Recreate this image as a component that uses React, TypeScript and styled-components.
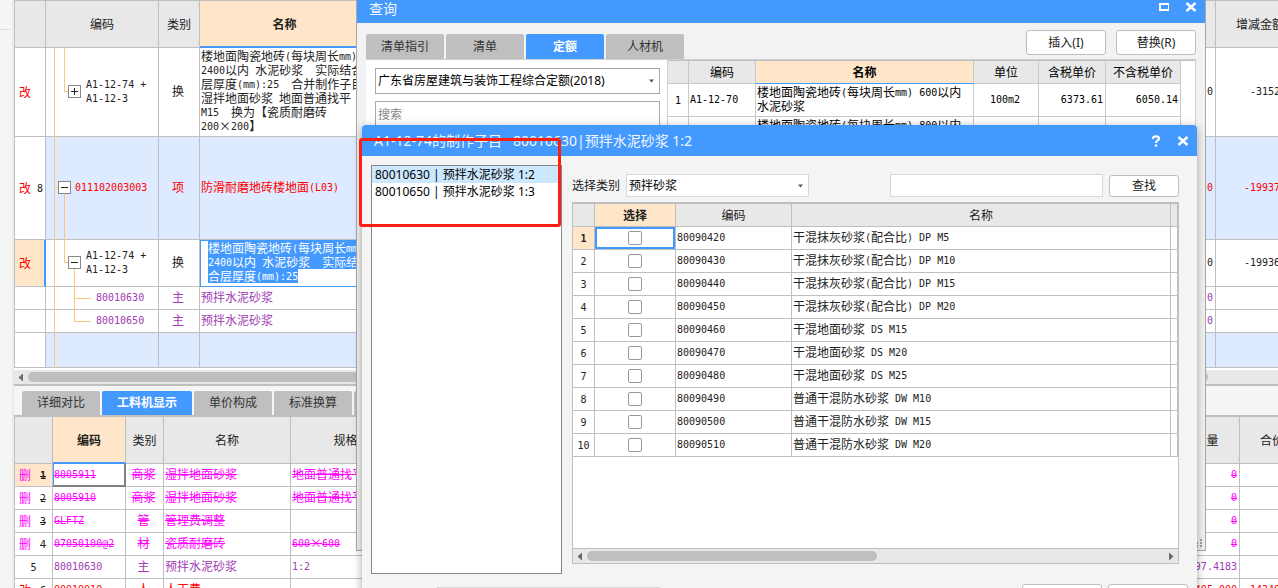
import React from "react";
import styled, { createGlobalStyle, css } from "styled-components";

const BLUE = "#4499ff";
const LINE = "#bfbfbf";
const HEAD = "#e8e8e8";
const PEACH = "#ffe6c8";
const RED = "#ff0000";
const MAGENTA = "#ff00ff";
const PURPLE = "#a03cb4";
const UI_FONT = '"Noto Sans", "Noto Sans CJK SC", sans-serif';
const GRID_FONT = '"Noto Sans CJK SC", sans-serif';

const GlobalStyle = createGlobalStyle`
  * { box-sizing: border-box; }
  body {
    margin: 0;
    background: #f5f5f5;
    color: #222;
    font: 12px/14px ${UI_FONT};
  }
  button, input, select { font: inherit; color: inherit; margin: 0; }
`;

/* ---------- shared grid parts ---------- */

const Latin = styled.span`
  font-family: "DejaVu Sans Mono", monospace;
  font-size: 10px;
  line-height: 1;
  vertical-align: 1px;
`;
const Han = styled.span``;

function GridText({ text }: { text: string }) {
  const runs = text.match(/[\x20-\x7e]+|[^\x20-\x7e]+/g) ?? [];
  return (
    <>
      {runs.map((run, i) =>
        /^[\x20-\x7e]/.test(run) ? <Latin key={i}>{run}</Latin> : <Han key={i}>{run}</Han>
      )}
    </>
  );
}

const Grid = styled.table<{ $line?: string }>`
  width: 100%;
  table-layout: fixed;
  border-collapse: separate;
  border-spacing: 0;
  background: #fff;
  font: 12px/14px ${GRID_FONT};
  white-space: pre;

  th, td {
    padding: 0 2px;
    border-right: 1px solid ${(p) => p.$line ?? LINE};
    border-bottom: 1px solid ${(p) => p.$line ?? LINE};
    overflow: hidden;
    text-align: left;
    vertical-align: middle;
    font-weight: 400;
  }
  td { padding: 0 2px 2px 1px; }
`;

const Row = styled.tr<{ $h: number; $color?: string; $tint?: boolean; $struck?: boolean }>`
  height: ${(p) => p.$h}px;
  color: ${(p) => p.$color ?? "inherit"};
  td { background: ${(p) => (p.$tint ? "#ddeaff" : "#fff")}; }
  ${(p) => p.$struck && css`${Latin}, ${Han} { text-decoration: line-through; }`}
`;

const HeadRow = styled.tr<{ $h: number }>`
  height: ${(p) => p.$h}px;
  && th { background: ${HEAD}; text-align: center; }
`;

const ActiveTh = styled.th<{ $rule?: number }>`
  &&&& {
    background: ${PEACH};
    font-weight: 700;
    ${(p) => p.$rule && css`border-bottom: ${p.$rule}px solid ${BLUE};`}
  }
`;

const CenterTd = styled.td`
  && { text-align: center; padding-left: 0; }
`;
const RightTd = styled.td`
  && { text-align: right; }
`;
const EdgeTd = styled.td`
  && { text-align: right; padding-right: 24px; }
`;

const RowMark = styled.th<{ $active?: boolean; $bar?: boolean }>`
  && {
    padding: 0 4px;
    background: ${(p) => (p.$active ? PEACH : "#fff")};
    ${(p) => p.$bar && css`border-right: 2px solid ${BLUE};`}
  }
`;
const MarkLine = styled.span<{ $color?: string }>`
  display: flex;
  align-items: center;
  gap: 6px;
  color: ${(p) => p.$color ?? "inherit"};
`;
const MarkLineWide = styled(MarkLine)`
  gap: 9px;
`;
const MarkNumber = styled.span<{ $bold?: boolean }>`
  color: #222;
  font-weight: ${(p) => (p.$bold ? 700 : 400)};
`;

/* ---------- tree cell ---------- */

const TreeTd = styled.td<{ $indent: number }>`
  && {
    position: relative;
    padding-left: ${(p) => p.$indent}px;
    overflow: visible;
  }
`;
const TreeArt = styled.svg`
  position: absolute;
  left: 0;
  top: 0;
  width: 60px;
  height: calc(100% + 1px);
`;

type Stroke = [string | number, string | number, string | number, string | number];
function Branches({ lines, box }: { lines: Stroke[]; box?: { x: number; open: boolean } }) {
  return (
    <TreeArt aria-hidden>
      {lines.map(([x1, y1, x2, y2], i) => (
        <line key={i} x1={x1} y1={y1} x2={x2} y2={y2} stroke="#ffc67a" strokeWidth="1" shapeRendering="crispEdges" />
      ))}
      {box && (
        <svg x={box.x} y="50%" width="13" height="13" overflow="visible">
          <g transform="translate(0 -7.5)" shapeRendering="crispEdges">
            <rect x="0.5" y="0.5" width="12" height="12" fill="#fff" stroke="#888" />
            <path d={box.open ? "M3 6.5H10" : "M3 6.5H10M6.5 3V10"} stroke="#222" />
          </g>
        </svg>
      )}
    </TreeArt>
  );
}

/* ---------- main page ---------- */

const Desktop = styled.div`
  position: relative;
  display: flex;
  height: 100vh;
  overflow: hidden;
`;
const Gutter = styled.div`
  flex: none;
  width: 14px;
  border-right: 2px solid #ebebeb;
`;
const GutterMark = styled.div`
  width: 10px;
  height: 30px;
  border-bottom: 1px solid #ddd;
`;
const Main = styled.main`
  flex: 1;
  min-width: 0;
`;
const Overflowing = styled.div<{ $top: number }>`
  width: calc(100% + 27px);
  border-left: 1px solid ${LINE};
  border-top: ${(p) => p.$top}px solid ${LINE};
`;

const EditTd = styled.td`
  && {
    border-bottom-color: ${BLUE};
    box-shadow: inset 1px 1px ${BLUE};
    padding-left: 8px;
  }
`;
const Selected = styled.span`
  background: ${BLUE};
  color: #fff;
  display: table;
`;

const ScrollTrack = styled.div<{ $gap?: boolean }>`
  display: flex;
  align-items: center;
  gap: 5px;
  height: ${(p) => (p.$gap ? 18 : 15)}px;
  padding: 0 4px;
  background: ${HEAD};
  ${(p) =>
    p.$gap
      ? css`border-top: 2px solid #fff; border-bottom: 2px solid ${LINE};`
      : css`border-top: 1px solid ${LINE};`}
`;
const Thumb = styled.div<{ $share: string }>`
  width: ${(p) => p.$share};
  height: 10px;
  border-radius: 5px;
  background: ${LINE};
`;
const ArrowRight = styled.svg`
  margin-left: auto;
`;

const LowerTabs = styled.nav`
  display: flex;
  gap: 2px;
  height: 29px;
  padding: 5px 8px 0;
`;
const Tab = styled.button<{ $on?: boolean; $wide?: boolean }>`
  flex: none;
  width: ${(p) => (p.$wide ? 90 : 78)}px;
  padding: 0;
  border: 0;
  border-radius: 2px 2px 0 0;
  background: ${(p) => (p.$on ? BLUE : LINE)};
  color: ${(p) => (p.$on ? "#fff" : "#333")};
  font-weight: ${(p) => (p.$on ? 700 : 400)};
`;

/* ---------- dialogs ---------- */

const QueryDialog = styled.section`
  position: absolute;
  left: 356px;
  right: 72px;
  top: 0;
  height: 551px;
  display: flex;
  flex-direction: column;
  border: 1px solid #a8a8a8;
  border-top: 0;
  background: #f2f2f2;
`;
const TitleBar = styled.header<{ $h: number }>`
  flex: none;
  display: flex;
  align-items: center;
  height: ${(p) => p.$h}px;
  padding: 0 8px 0 12px;
  background: ${BLUE};
  color: #f0f7ff;
  font-size: 14px;
  line-height: 16px;
  white-space: pre;
`;
const TitleText = styled.h2`
  flex: 1;
  margin: 0;
  font: inherit;
`;
const TitleButton = styled.button`
  display: flex;
  margin-left: 16px;
  padding: 0;
  border: 0;
  background: none;
  color: #fff;
`;
const QueryTitle = styled(TitleBar)`
  align-items: flex-start;
  padding-top: 1px;
`;
const QueryTop = styled.div`
  display: flex;
  align-items: flex-end;
  gap: 2px;
  height: 36px;
  padding: 0 9px;
`;
const QueryTab = styled(Tab)`
  height: 25px;
`;
const TopActions = styled.div`
  display: flex;
  gap: 10px;
  margin: 0 0 4px auto;
`;
const PushButton = styled.button<{ $w: number; $h: number }>`
  flex: none;
  width: ${(p) => p.$w}px;
  height: ${(p) => p.$h}px;
  padding: 0;
  border: 1px solid ${LINE};
  border-radius: 3px;
  background: #fff;
  color: #222;
`;
const QueryBody = styled.div`
  flex: 1;
  display: flex;
  margin: 0 9px 9px;
  border-top: 1px solid #d0d0d0;
  border-right: 1px solid #d0d0d0;
  background: #fff;
`;
const QuerySide = styled.div`
  flex: none;
  display: flex;
  flex-direction: column;
  gap: 7px;
  width: 302px;
  padding: 8px 7px 0 9px;
  border-right: 1px solid #d0d0d0;
`;
const QueryResult = styled.div`
  flex: 1;
  padding-right: 14px;
  border-top: 1px solid ${LINE};
  color: #000;
`;
const SelectBox = styled.div<{ $w?: string; $h: number; $edge: string }>`
  position: relative;
  width: ${(p) => p.$w ?? "auto"};
  height: ${(p) => p.$h}px;

  select {
    appearance: none;
    width: 100%;
    height: 100%;
    padding: 0 2px;
    border: 1px solid ${(p) => p.$edge};
    border-radius: 0;
    background: #fff;
    color: #000;
  }
  svg {
    position: absolute;
    right: 6px;
    top: calc(50% - 2px);
  }
`;
const TextBox = styled.input<{ $w?: string; $h: number; $edge: string }>`
  width: ${(p) => p.$w ?? "auto"};
  height: ${(p) => p.$h}px;
  padding: 0 2px;
  border: 1px solid ${(p) => p.$edge};
  background: #fff;
  &::placeholder { color: #888; opacity: 1; }
`;
const Grip = styled.svg`
  position: absolute;
  right: 3px;
  bottom: 3px;
`;

const MakeDialog = styled.section`
  position: absolute;
  left: 362px;
  right: 81px;
  top: 125px;
  border-radius: 4px 4px 0 0;
  background: #f4f4f4;
  box-shadow: 0 2px 10px rgba(0, 0, 0, 0.35);
`;
const MakeTitle = styled(TitleBar)`
  border-radius: 4px 4px 0 0;
`;
const MakeBody = styled.div`
  display: flex;
  gap: 10px;
  height: 418px;
  padding: 9px 18px 0 9px;
  margin-bottom: 10px;
`;
const ItemList = styled.ul`
  flex: none;
  width: 191px;
  margin: 0;
  padding: 0;
  border: 1px solid #828790;
  background: #fff;
  color: #000;
  list-style: none;
`;
const Item = styled.li<{ $on?: boolean }>`
  height: 17px;
  padding: 0 3px;
  line-height: 17px;
  background: ${(p) => (p.$on ? "#cce8ff" : "transparent")};
`;
const MakeMain = styled.div`
  flex: 1;
  min-width: 0;
  display: flex;
  flex-direction: column;
  gap: 5px;
  padding: 9px 0 10px;
`;
const FilterBar = styled.form`
  display: flex;
  align-items: center;
  gap: 6px;
  height: 23px;
`;
const Spacer = styled.span`
  flex: 1;
`;
const GridFrame = styled.div`
  flex: 1;
  display: flex;
  flex-direction: column;
  justify-content: space-between;
  border: 1px solid ${LINE};
  border-top-width: 2px;
  background: #fff;
`;
const PickTd = styled.td<{ $focus?: boolean }>`
  && {
    padding: 0;
    text-align: center;
    line-height: 0;
    ${(p) => p.$focus && css`box-shadow: inset 0 0 0 2px ${BLUE};`}
  }
`;
const Tick = styled.input`
  appearance: none;
  width: 14px;
  height: 14px;
  border: 1px solid #999;
  border-radius: 2px;
  background: #fff;
  vertical-align: middle;
`;
const NumberTh = styled.th<{ $on?: boolean }>`
  &&& {
    text-align: center;
    background: ${(p) => (p.$on ? PEACH : "#fff")};
    font-weight: ${(p) => (p.$on ? 700 : 400)};
  }
`;
const FocusTd = styled.td`
  && {
    padding-bottom: 1px;
    border-right: 2px solid #808080;
    border-bottom: 2px solid #808080;
    box-shadow: inset 1px 0 ${BLUE};
  }
`;
const MakeFooter = styled.footer`
  display: flex;
  gap: 6px;
  height: 40px;
  padding: 0 9px 0 75px;
`;
const FooterField = styled(TextBox)`
  margin: 3px auto 0 0;
`;
const Highlight = styled.div`
  position: absolute;
  left: -3px;
  top: 13px;
  width: 202px;
  height: 89px;
  border: 3px solid #ff1f12;
  border-radius: 3px;
  pointer-events: none;
`;

const Caret = () => (
  <svg width="5" height="4" viewBox="0 0 5 4" aria-hidden>
    <path d="M0 0.5H5L2.5 3.5Z" fill="#555" />
  </svg>
);
const Cross = () => (
  <svg width="12" height="12" viewBox="0 0 12 12" aria-hidden>
    <path d="M1.5 2L10.5 10M10.5 2L1.5 10" stroke="currentColor" strokeWidth="2.4" />
  </svg>
);
const LeftArrow = () => (
  <svg width="5" height="9" viewBox="0 0 5 9" aria-hidden>
    <path d="M5 0.5V8.5L0.5 4.5Z" fill="#6a6a72" />
  </svg>
);

const detailRows = [
  { mark: "删", n: "1", code: "8005911", kind: "商浆", name: "湿拌地面砂浆", spec: "地面普通找平", qty: "0", color: MAGENTA, struck: true },
  { mark: "删", n: "2", code: "8005910", kind: "商浆", name: "湿拌地面砂浆", spec: "地面普通找平", qty: "0", color: MAGENTA, struck: true },
  { mark: "删", n: "3", code: "GLFTZ", kind: "管", name: "管理费调整", spec: "", qty: "0", color: MAGENTA, struck: true },
  { mark: "删", n: "4", code: "07050100@2", kind: "材", name: "瓷质耐磨砖", spec: "600×600", qty: "0", color: MAGENTA, struck: true },
  { mark: "", n: "5", code: "80010630", kind: "主", name: "预拌水泥砂浆", spec: "1:2", qty: "97.4183", color: PURPLE },
  { mark: "改", n: "6", code: "00010010", kind: "人", name: "人工费", spec: "", qty: "9405.000", sum: "14340", color: RED },
];

const mortars = [
  ["80090420", "干混抹灰砂浆(配合比) DP M5"],
  ["80090430", "干混抹灰砂浆(配合比) DP M10"],
  ["80090440", "干混抹灰砂浆(配合比) DP M15"],
  ["80090450", "干混抹灰砂浆(配合比) DP M20"],
  ["80090460", "干混地面砂浆 DS M15"],
  ["80090470", "干混地面砂浆 DS M20"],
  ["80090480", "干混地面砂浆 DS M25"],
  ["80090490", "普通干混防水砂浆 DW M10"],
  ["80090500", "普通干混防水砂浆 DW M15"],
  ["80090510", "普通干混防水砂浆 DW M20"],
];

function BudgetGrid() {
  return (
    <Overflowing $top={1}>
      <Grid>
        <colgroup>
          <col style={{ width: 31 }} />
          <col style={{ width: 113 }} />
          <col style={{ width: 41 }} />
          <col style={{ width: 170 }} />
          <col />
          <col style={{ width: 40 }} />
          <col style={{ width: 89 }} />
        </colgroup>
        <thead>
          <HeadRow $h={47}>
            <th />
            <th>编码</th>
            <th>类别</th>
            <ActiveTh $rule={2}>名称</ActiveTh>
            <th />
            <th />
            <th>增减金额</th>
          </HeadRow>
        </thead>
        <tbody>
          <Row $h={89}>
            <RowMark><MarkLine $color={RED}>改</MarkLine></RowMark>
            <TreeTd $indent={40}>
              <Branches lines={[[8.5, 0, 8.5, "100%"], [18.5, 0, 18.5, "49.5%"], [18, "49%", 22, "49%"]]} box={{ x: 22, open: false }} />
              <GridText text={"A1-12-74 +"} /><br /><GridText text="A1-12-3" />
            </TreeTd>
            <CenterTd>换</CenterTd>
            <td>
              <GridText text={"楼地面陶瓷地砖(每块周长mm)"} /><br />
              <GridText text={"2400以内 水泥砂浆  实际结合"} /><br />
              <GridText text={"层厚度(mm):25  合并制作子目"} /><br />
              <GridText text={"湿拌地面砂浆 地面普通找平"} /><br />
              <GridText text={"M15  换为【瓷质耐磨砖"} /><br />
              <GridText text={"200×200】"} />
            </td>
            <td />
            <RightTd><GridText text="0" /></RightTd>
            <EdgeTd><GridText text="-3152" /></EdgeTd>
          </Row>
          <Row $h={103} $color={RED} $tint>
            <RowMark><MarkLine>改<MarkNumber><GridText text="8" /></MarkNumber></MarkLine></RowMark>
            <TreeTd $indent={29}>
              <Branches lines={[[8.5, 0, 8.5, "100%"], [8, "49%", 12, "49%"], [18.5, "50%", 18.5, "100%"]]} box={{ x: 12, open: true }} />
              <GridText text="011102003003" />
            </TreeTd>
            <CenterTd>项</CenterTd>
            <td><GridText text="防滑耐磨地砖楼地面(L03)" /></td>
            <td />
            <RightTd><GridText text="0" /></RightTd>
            <EdgeTd><GridText text="-19937" /></EdgeTd>
          </Row>
          <Row $h={47}>
            <RowMark $active $bar><MarkLine $color={RED}>改</MarkLine></RowMark>
            <TreeTd $indent={40}>
              <Branches
                lines={[[8.5, 0, 8.5, "100%"], [18.5, 0, 18.5, "49%"], [18, "48%", 22, "48%"], [28.5, "50%", 28.5, "100%"]]}
                box={{ x: 22, open: true }}
              />
              <GridText text={"A1-12-74 +"} /><br /><GridText text="A1-12-3" />
            </TreeTd>
            <CenterTd>换</CenterTd>
            <EditTd>
              <Selected><GridText text={"楼地面陶瓷地砖(每块周长mm)"} /></Selected>
              <Selected><GridText text={"2400以内 水泥砂浆  实际结"} /></Selected>
              <Selected><GridText text={"合层厚度(mm):25"} /></Selected>
            </EditTd>
            <td />
            <RightTd><GridText text="0" /></RightTd>
            <EdgeTd><GridText text="-19936" /></EdgeTd>
          </Row>
          {["80010630", "80010650"].map((code, i) => (
            <Row key={code} $h={23} $color={PURPLE}>
              <RowMark />
              <TreeTd $indent={50}>
                <Branches lines={[[8.5, 0, 8.5, "100%"], [28.5, 0, 28.5, i ? "50%" : "100%"], [28, "48%", 45, "48%"]]} />
                <GridText text={code} />
              </TreeTd>
              <CenterTd>主</CenterTd>
              <td>预拌水泥砂浆</td>
              <td />
              <RightTd><GridText text="0" /></RightTd>
              <EdgeTd />
            </Row>
          ))}
          <Row $h={35} $tint>
            <RowMark />
            <TreeTd $indent={29}><Branches lines={[[8.5, 0, 8.5, "100%"]]} /></TreeTd>
            <td />
            <td />
            <td />
            <td />
            <td />
          </Row>
        </tbody>
      </Grid>
    </Overflowing>
  );
}

function DetailGrid() {
  return (
    <Overflowing $top={2}>
      <Grid>
        <colgroup>
          <col style={{ width: 38 }} />
          <col style={{ width: 73 }} />
          <col style={{ width: 38 }} />
          <col style={{ width: 127 }} />
          <col style={{ width: 134 }} />
          <col />
          <col style={{ width: 66 }} />
          <col style={{ width: 65 }} />
        </colgroup>
        <thead>
          <HeadRow $h={47}>
            <th />
            <ActiveTh $rule={2}>编码</ActiveTh>
            <th>类别</th>
            <th>名称</th>
            <th>规格型号</th>
            <th />
            <th>数量</th>
            <th>合价</th>
          </HeadRow>
        </thead>
        <tbody>
          {detailRows.map((r, i) => {
            const Code = i === 0 ? FocusTd : "td";
            return (
              <Row key={r.n} $h={23} $color={r.color} $struck={r.struck}>
                {r.mark ? (
                  <RowMark $active={i === 0}>
                    <MarkLineWide>
                      {r.mark}
                      <MarkNumber $bold={i === 0}><GridText text={r.n} /></MarkNumber>
                    </MarkLineWide>
                  </RowMark>
                ) : (
                  <NumberTh><MarkNumber><GridText text={r.n} /></MarkNumber></NumberTh>
                )}
                <Code><GridText text={r.code} /></Code>
                <CenterTd><GridText text={r.kind} /></CenterTd>
                <td><GridText text={r.name} /></td>
                <td><GridText text={r.spec} /></td>
                <td />
                <RightTd><GridText text={r.qty} /></RightTd>
                <EdgeTd><GridText text={r.sum ?? ""} /></EdgeTd>
              </Row>
            );
          })}
        </tbody>
      </Grid>
    </Overflowing>
  );
}

function Query() {
  return (
    <QueryDialog aria-label="查询">
      <QueryTitle $h={23}>
        <TitleText>查询</TitleText>
        <TitleButton aria-label="最大化">
          <svg width="12" height="12" viewBox="0 0 12 12" aria-hidden>
            <path d="M3 3H12V9H3Z" fill="none" stroke="currentColor" strokeWidth="2" />
          </svg>
        </TitleButton>
        <TitleButton aria-label="关闭"><Cross /></TitleButton>
      </QueryTitle>
      <QueryTop>
        <QueryTab>清单指引</QueryTab>
        <QueryTab>清单</QueryTab>
        <QueryTab $on>定额</QueryTab>
        <QueryTab>人材机</QueryTab>
        <TopActions>
          <PushButton $w={80} $h={25}>插入(I)</PushButton>
          <PushButton $w={80} $h={25}>替换(R)</PushButton>
        </TopActions>
      </QueryTop>
      <QueryBody>
        <QuerySide>
          <SelectBox $h={26} $edge="#a8a8a8">
            <select aria-label="定额库">
              <option>广东省房屋建筑与装饰工程综合定额(2018)</option>
            </select>
            <Caret />
          </SelectBox>
          <TextBox $h={26} $edge="#a8a8a8" placeholder="搜索" aria-label="搜索" />
        </QuerySide>
        <QueryResult>
          <Grid $line="#c8c8c8">
            <colgroup>
              <col style={{ width: 21 }} />
              <col style={{ width: 67 }} />
              <col />
              <col style={{ width: 65 }} />
              <col style={{ width: 67 }} />
              <col style={{ width: 75 }} />
            </colgroup>
            <thead>
              <HeadRow $h={23}>
                <th />
                <th>编码</th>
                <ActiveTh $rule={1}>名称</ActiveTh>
                <th>单位</th>
                <th>含税单价</th>
                <th>不含税单价</th>
              </HeadRow>
            </thead>
            <tbody>
              <Row $h={33}>
                <NumberTh><GridText text="1" /></NumberTh>
                <td><GridText text="A1-12-70" /></td>
                <td><GridText text={"楼地面陶瓷地砖(每块周长mm) 600以内"} /><br />水泥砂浆</td>
                <CenterTd><GridText text="100m2" /></CenterTd>
                <RightTd><GridText text="6373.61" /></RightTd>
                <RightTd><GridText text="6050.14" /></RightTd>
              </Row>
              <Row $h={33}>
                <NumberTh><GridText text="2" /></NumberTh>
                <td><GridText text="A1-12-71" /></td>
                <td><GridText text={"楼地面陶瓷地砖(每块周长mm) 800以内"} /><br />水泥砂浆</td>
                <CenterTd />
                <RightTd />
                <RightTd />
              </Row>
            </tbody>
          </Grid>
        </QueryResult>
      </QueryBody>
      <Grip width="6" height="8" viewBox="0 0 6 8" aria-hidden>
        <path d="M4 0h2v2h-2zM0 3h2v2h-2zM4 3h2v2h-2zM0 6h2v2h-2zM4 6h2v2h-2z" fill="#a0a0a0" />
      </Grip>
    </QueryDialog>
  );
}

function MakeItems() {
  return (
    <MakeDialog aria-label="制作子目">
      <MakeTitle $h={31}>
        <TitleText>{"A1-12-74的制作子目   80010630|预拌水泥砂浆 1:2"}</TitleText>
        <TitleButton aria-label="帮助">
          <svg width="10" height="12" viewBox="0 0 10 12" aria-hidden>
            <path d="M2 4V3.2Q2.2 1.4 5 1.4T8 3.6Q8 4.8 6.4 5.6Q5 6.4 5 8" fill="none" stroke="currentColor" strokeWidth="2.2" />
            <path d="M3.9 9.4h2.2v2.2h-2.2z" fill="currentColor" />
          </svg>
        </TitleButton>
        <TitleButton aria-label="关闭"><Cross /></TitleButton>
      </MakeTitle>
      <MakeBody>
        <ItemList>
          <Item $on>80010630 | 预拌水泥砂浆 1:2</Item>
          <Item>80010650 | 预拌水泥砂浆 1:3</Item>
        </ItemList>
        <MakeMain>
          <FilterBar onSubmit={(e) => e.preventDefault()}>
            <label htmlFor="kind">选择类别</label>
            <SelectBox $w="183px" $h={23} $edge="#d8d8d8">
              <select id="kind">
                <option>预拌砂浆</option>
              </select>
              <Caret />
            </SelectBox>
            <Spacer />
            <TextBox $w="213px" $h={23} $edge="#d8d8d8" aria-label="查找内容" />
            <PushButton $w={70} $h={22}>查找</PushButton>
          </FilterBar>
          <GridFrame>
            <Grid>
              <colgroup>
                <col style={{ width: 22 }} />
                <col style={{ width: 81 }} />
                <col style={{ width: 116 }} />
                <col />
                <col style={{ width: 7 }} />
              </colgroup>
              <thead>
                <HeadRow $h={23}>
                  <th />
                  <ActiveTh>选择</ActiveTh>
                  <th>编码</th>
                  <th>名称</th>
                  <th />
                </HeadRow>
              </thead>
              <tbody>
                {mortars.map(([code, name], i) => (
                  <Row key={code} $h={23}>
                    <NumberTh $on={i === 0}><GridText text={String(i + 1)} /></NumberTh>
                    <PickTd $focus={i === 0}><Tick type="checkbox" aria-label={name} /></PickTd>
                    <td><GridText text={code} /></td>
                    <td><GridText text={name} /></td>
                    <td />
                  </Row>
                ))}
              </tbody>
            </Grid>
            <ScrollTrack>
              <LeftArrow />
              <Thumb $share="48.5%" />
              <ArrowRight width="5" height="9" viewBox="0 0 5 9" aria-hidden>
                <path d="M0 0.5V8.5L4.5 4.5Z" fill="#6a6a72" />
              </ArrowRight>
            </ScrollTrack>
          </GridFrame>
        </MakeMain>
      </MakeBody>
      <MakeFooter>
        <FooterField $w="223px" $h={23} $edge="#d8d8d8" aria-label="说明" />
        <PushButton $w={80} $h={25} aria-label="确定" />
        <PushButton $w={80} $h={25} aria-label="取消" />
      </MakeFooter>
      <Highlight />
    </MakeDialog>
  );
}

export default function App() {
  return (
    <>
      <GlobalStyle />
      <Desktop>
        <Gutter><GutterMark /></Gutter>
        <Main>
          <BudgetGrid />
          <ScrollTrack $gap>
            <LeftArrow />
            <Thumb $share="calc(100% - 76px)" />
          </ScrollTrack>
          <LowerTabs>
            <Tab>详细对比</Tab>
            <Tab $on $wide>工料机显示</Tab>
            <Tab>单价构成</Tab>
            <Tab>标准换算</Tab>
            <Tab>换算信息</Tab>
          </LowerTabs>
          <DetailGrid />
        </Main>
        <Query />
        <MakeItems />
      </Desktop>
    </>
  );
}
